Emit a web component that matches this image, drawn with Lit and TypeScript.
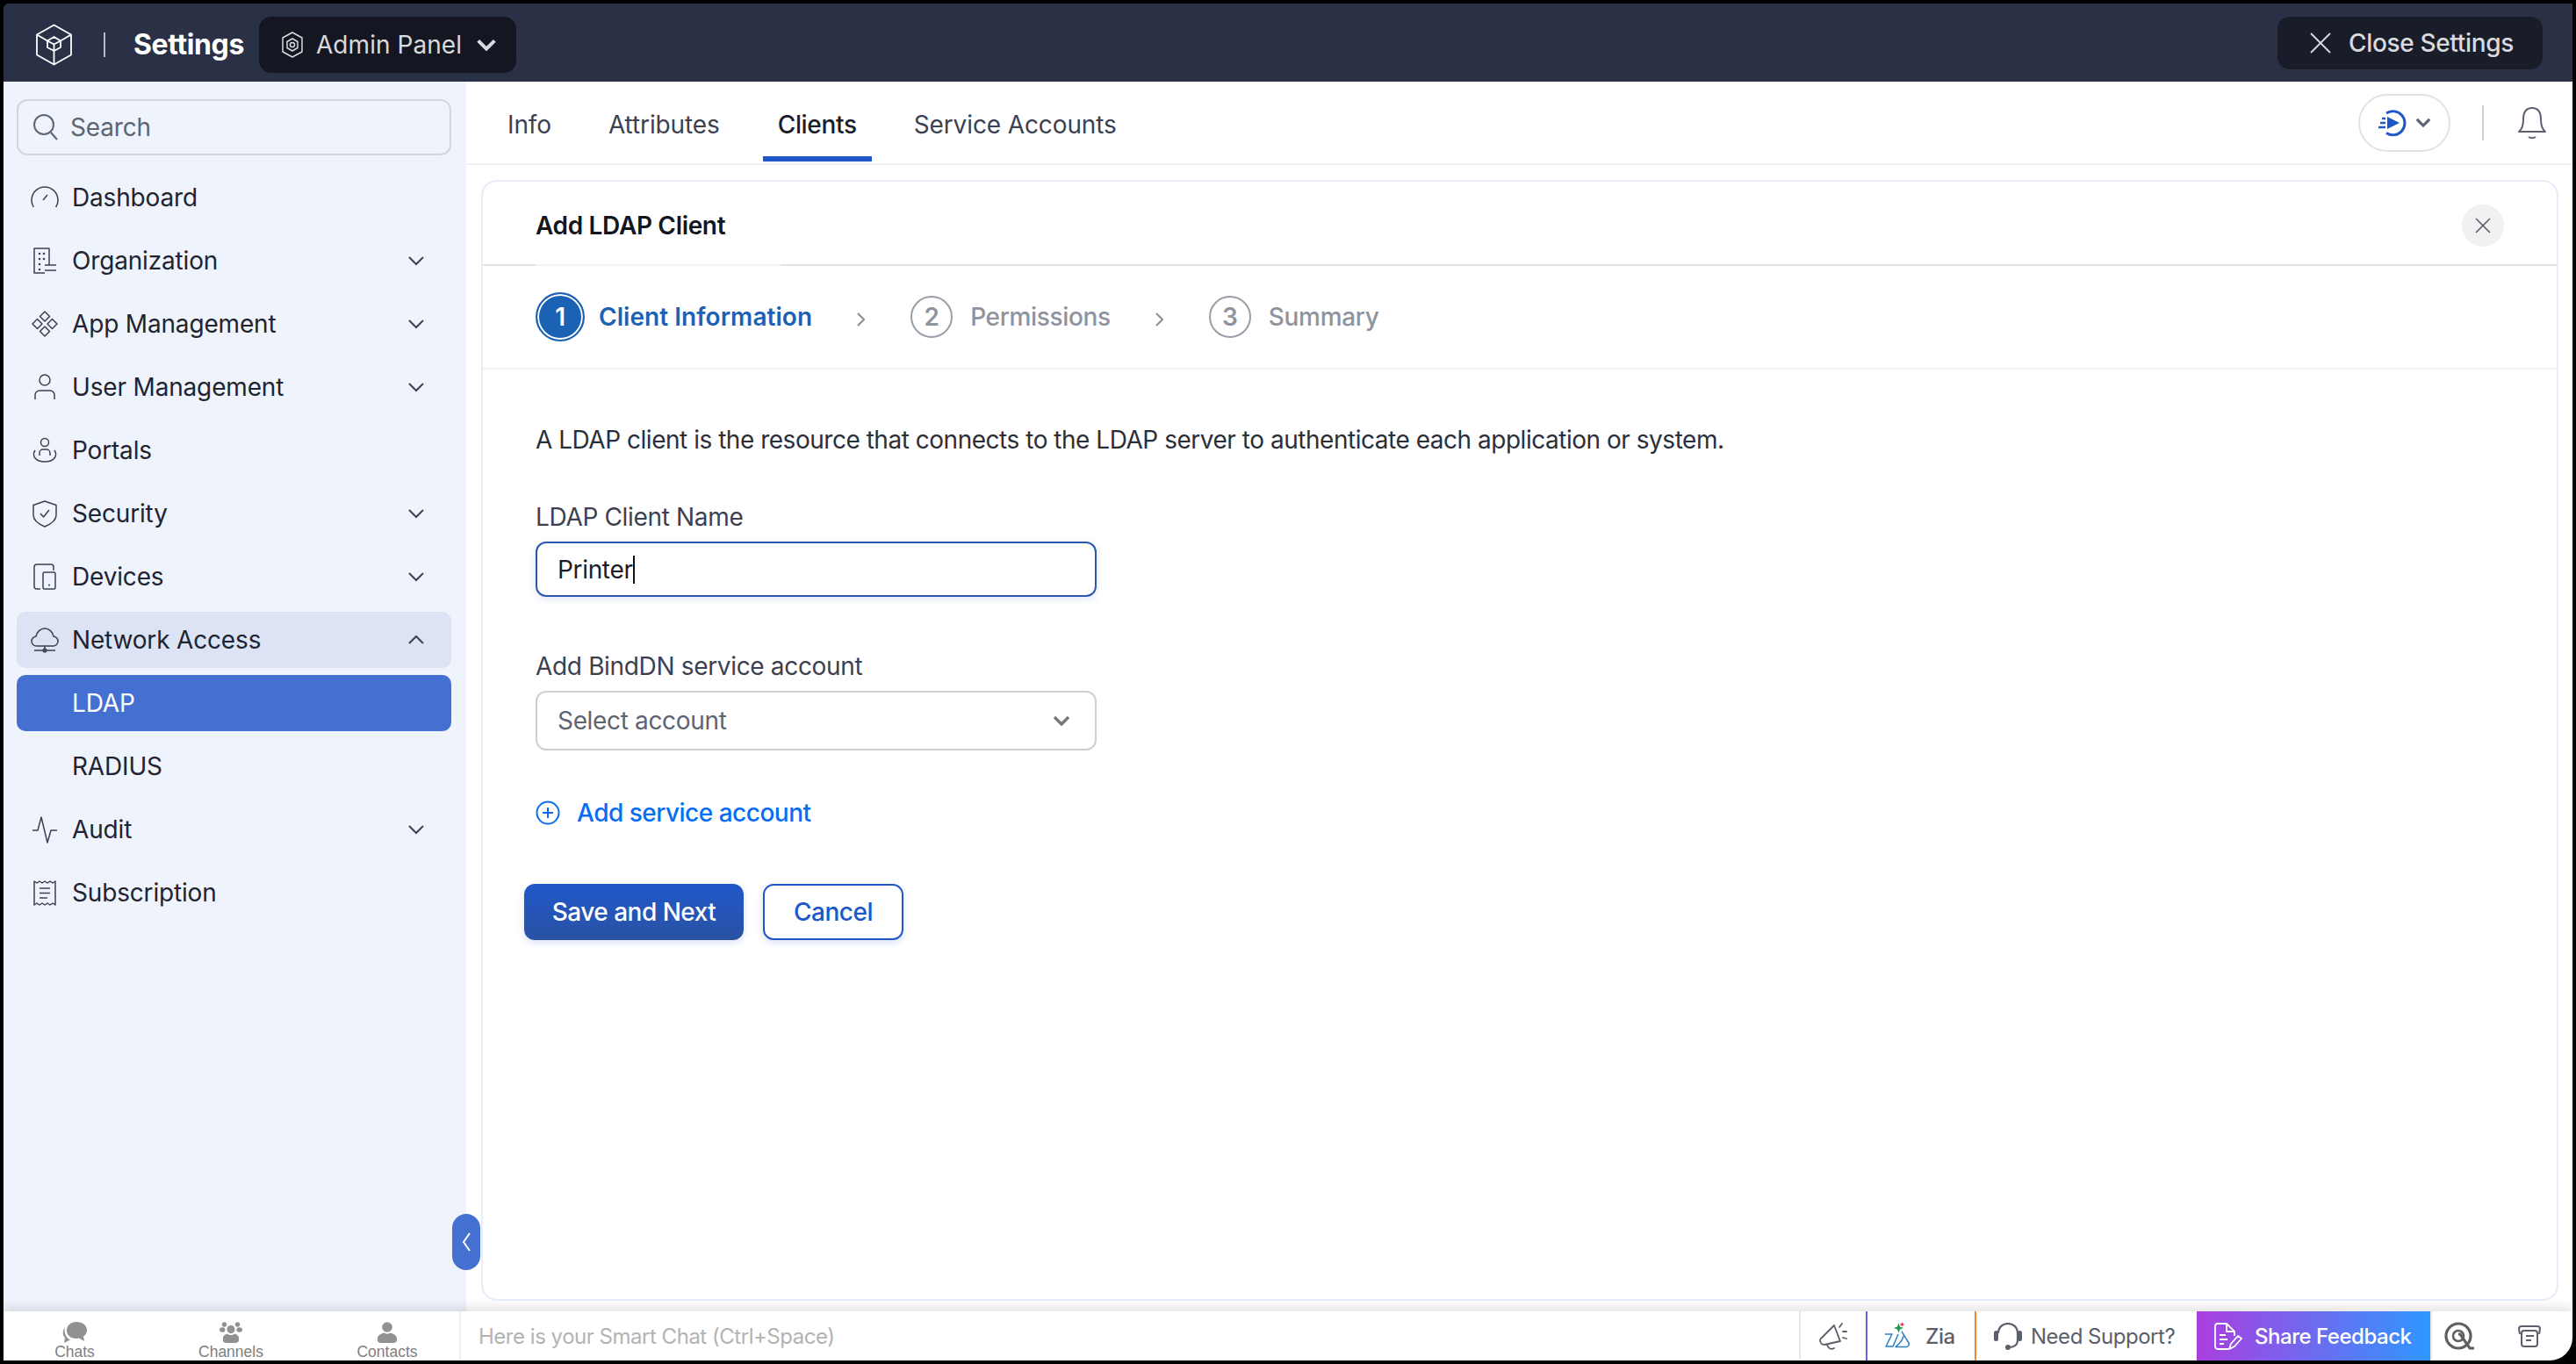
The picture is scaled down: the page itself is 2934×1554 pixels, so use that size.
import { LitElement, css, html, svg } from 'lit';
import { customElement } from 'lit/decorators.js';

const chevronDown = svg`<path d="M2 2 L10 10 L18 2" />`;

const navIcons: Record<string, unknown> = {
  dashboard: svg`<path d="M3.300 27 A15 15 0 1 1 28.700 27" /><path d="M14 19 L19 13" />`,
  org: svg`<path d="M16 30 H4 V2 H21 V21" /><path d="M10 8h.01M15 8h.01M10 14h.01M15 14h.01M10 20h.01M10 26h.01" stroke-width="2.600" stroke-linecap="round" /><path d="M16 21 H29 M16 27 H29" />`,
  apps: svg`<path d="M16 2 L21.500 7.500 L16 13 L10.500 7.500 Z" /><path d="M7.500 10.500 L13 16 L7.500 21.500 L2 16 Z" /><path d="M24.500 10.500 L30 16 L24.500 21.500 L19 16 Z" /><path d="M16 19 L21.500 24.500 L16 30 L10.500 24.500 Z" />`,
  user: svg`<circle cx="16" cy="8" r="6" /><path d="M5 30 V25 A5 5 0 0 1 10 20 H22 A5 5 0 0 1 27 25 V30" />`,
  portals: svg`<circle cx="16" cy="7" r="4.500" /><path d="M10 22 V19 A4 4 0 0 1 14 15 H18 A4 4 0 0 1 22 19 V22" /><path d="M5 16 C1 22 5 29 16 29 C27 29 31 22 27 16" />`,
  security: svg`<path d="M16 2 L29 6.500 V18 C29 24 23 28 16 31 C9 28 3 24 3 18 V6.500 Z" /><path d="M11 16 L14.500 20 L21 12" />`,
  devices: svg`<path d="M11 30 H7 A3 3 0 0 1 4 27 V5 A3 3 0 0 1 7 2 H23 A3 3 0 0 1 26 5 V9" /><rect x="14" y="11" width="14" height="19" rx="1.500" /><path d="M21 25.500h.01" stroke-width="2" stroke-linecap="round" />`,
  network: svg`<path d="M9 23 H7 A5.500 5.500 0 0 1 6 12 C7 7 11 3 16 3 C21 3 25 7 26 12 A5.500 5.500 0 0 1 25 23 H9 Z" /><path d="M16 23 V28 M4 28 H28" /><circle cx="16" cy="28" r="1.800" />`,
  audit: svg`<path d="M2 17 H8 L12 2 L19 31 L23 17 H30" />`,
  subscription: svg`<path d="M4 3 L7 5 L10 3 L13 5 L16 3 L19 5 L22 3 L25 5 L28 3 V30 L25 28 L22 30 L19 28 L16 30 L13 28 L10 30 L7 28 L4 30 Z" /><path d="M10 11 H22 M10 16.500 H22 M10 22 H19" />`,
};

const navItems = [
  { label: 'Dashboard', icon: 'dashboard' },
  { label: 'Organization', icon: 'org', arrow: 'down' },
  { label: 'App Management', icon: 'apps', arrow: 'down' },
  { label: 'User Management', icon: 'user', arrow: 'down' },
  { label: 'Portals', icon: 'portals' },
  { label: 'Security', icon: 'security', arrow: 'down' },
  { label: 'Devices', icon: 'devices', arrow: 'down' },
  { label: 'Network Access', icon: 'network', arrow: 'up', cls: 'open' },
  { label: 'LDAP', cls: 'active' },
  { label: 'RADIUS' },
  { label: 'Audit', icon: 'audit', arrow: 'down' },
  { label: 'Subscription', icon: 'subscription' },
];

@customElement('app-root')
export class AppRoot extends LitElement {
  static styles = css`
    :host {
      display: flex;
      flex-direction: column;
      box-sizing: border-box;
      height: 1554px;
      padding: 4px;
      background: #000;
      font-family: Inter, 'Noto Sans', sans-serif;
      font-size: 28px;
      letter-spacing: -0.012em;
      color: #1f2430;
      overflow: hidden;
    }

    svg {
      display: block;
      flex: none;
      fill: none;
      stroke: currentColor;
    }

    /* top bar */
    .topbar {
      display: flex;
      align-items: center;
      flex: none;
      box-sizing: border-box;
      height: 89px;
      padding-top: 4px;
      background: #2a3046;
      color: #fff;
      border-top-left-radius: 6px;
    }
    .logo { margin-left: 36px; width: 43px; height: 48px; stroke-width: 1.8; }
    .top-div { width: 2px; height: 28px; margin: 0 32px 0 35px; background: #b9bcc6; }
    .top-title { font-size: 32px; font-weight: 700; letter-spacing: -0.012em; }
    .panel-btn {
      display: flex;
      align-items: center;
      box-sizing: border-box;
      width: 293px;
      height: 64px;
      margin-left: 17px;
      padding-left: 25px;
      background: #141722;
      border-radius: 14px;
      color: #d9dade;
      letter-spacing: 0.002em;
    }
    .panel-btn .gear { width: 26px; height: 32px; margin-right: 14px; stroke-width: 1.5; }
    .panel-btn .chev { width: 24px; height: 14px; margin-left: 16px; stroke-width: 3.4; }
    .close-btn {
      display: flex;
      align-items: center;
      box-sizing: border-box;
      width: 302px;
      height: 60px;
      margin: -3px 34px 0 auto;
      padding-left: 36px;
      background: #191d2a;
      border-radius: 14px;
      color: #d9dade;
      font-weight: 500;
      letter-spacing: -0.012em;
    }
    .close-btn svg { width: 26px; height: 26px; margin-right: 19px; stroke-width: 1.8; }

    .body { display: flex; flex: 1; min-height: 0; position: relative; }

    /* sidebar */
    .side {
      flex: none;
      box-sizing: border-box;
      width: 527px;
      padding: 20px 17px 0 15px;
      background: #eff3fb;
      letter-spacing: -0.006em;
    }
    .search {
      display: flex;
      align-items: center;
      box-sizing: border-box;
      height: 64px;
      margin-bottom: 16px;
      padding-left: 16px;
      border: 2px solid #d3d5da;
      border-radius: 12px;
      color: #5d6472;
    }
    .search svg { width: 30px; height: 32px; margin-right: 13px; stroke-width: 2; }
    .item {
      display: flex;
      align-items: center;
      box-sizing: border-box;
      height: 64px;
      margin-bottom: 8px;
      padding-left: 16px;
      border-radius: 10px;
    }
    .item .ico { width: 32px; height: 32px; margin-right: 15px; stroke-width: 1.5; color: #3b4150; }
    .item .noico { width: 47px; flex: none; }
    .item .arrow { width: 20px; height: 12px; margin-left: auto; margin-right: 30px; stroke-width: 2; color: #3b4150; }
    .item.open { background: #dce3f4; }
    .item.open .arrow { transform: scaleY(-1); }
    .item.active { background: #4471d1; color: #fff; }

    .collapse {
      position: absolute;
      left: 511px;
      top: 1290px;
      display: flex;
      align-items: center;
      justify-content: center;
      width: 32px;
      height: 64px;
      background: #4471d1;
      border-radius: 16px;
      color: #fff;
    }
    .collapse svg { width: 10px; height: 22px; stroke-width: 2; }

    /* main */
    .main { display: flex; flex-direction: column; flex: 1; min-width: 0; background: #fff; }
    .tabs {
      display: flex;
      align-items: center;
      flex: none;
      box-sizing: border-box;
      height: 95px;
      padding-left: 30px;
      background: #fff;
      border-bottom: 2px solid #f1f1f2;
      color: #3b4150;
      letter-spacing: -0.004em;
    }
    .tab {
      display: flex;
      align-items: center;
      box-sizing: border-box;
      height: 93px;
      padding: 5px 17px 0;
      margin-right: 31px;
      position: relative;
    }
    .tab.on { color: #1a1d29; font-weight: 500; letter-spacing: -0.012em; margin-left: 1px; }
    .tab.on::after {
      content: '';
      position: absolute;
      left: 0;
      right: 0;
      bottom: 2px;
      height: 6px;
      background: #2156c9;
    }
    .tools { display: flex; align-items: center; margin-left: auto; }
    .chip {
      display: flex;
      align-items: center;
      justify-content: center;
      gap: 10px;
      box-sizing: border-box;
      width: 105px;
      height: 66px;
      border: 2px solid #e2e2e2;
      border-radius: 33px;
    }
    .chip .play { width: 32px; height: 32px; color: #2156c9; stroke-width: 3; }
    .chip .chev { width: 18px; height: 11px; color: #5a6070; stroke-width: 3.4; }
    .tool-div { width: 2px; height: 40px; margin: 0 38px 0 36px; background: #d2d2d2; }
    .bell { width: 34px; height: 38px; margin-right: 29px; color: #5a6070; stroke-width: 2; }

    .panel {
      display: flex;
      flex-direction: column;
      flex: 1;
      min-height: 0;
      margin: 17px 16px 12px 17px;
      background: #fff;
      border: 2px solid #e6ecf8;
      border-radius: 18px;
    }
    .panel-head {
      display: flex;
      align-items: center;
      flex: none;
      box-sizing: border-box;
      height: 96px;
      padding: 6px 60px 0 60px;
      border-bottom: 2px solid #e3e3e3;
      position: relative;
    }
    .panel-head::after {
      content: '';
      position: absolute;
      left: 60px;
      bottom: -2px;
      width: 279px;
      height: 2px;
      background: #f4f4f5;
    }
    .panel-title { font-weight: 600; color: #14161f; }
    .x-btn {
      display: flex;
      align-items: center;
      justify-content: center;
      width: 48px;
      height: 48px;
      margin-left: auto;
      border-radius: 50%;
      background: #f1f1f1;
      color: #5a5f6b;
    }
    .x-btn svg { width: 18px; height: 18px; stroke-width: 1.6; }

    .steps {
      display: flex;
      align-items: center;
      flex: none;
      box-sizing: border-box;
      height: 118px;
      padding-left: 60px;
      border-bottom: 2px solid #f1f1f2;
      color: #8e939e;
      font-weight: 500;
    }
    .num {
      display: flex;
      align-items: center;
      justify-content: center;
      box-sizing: border-box;
      width: 48px;
      height: 48px;
      margin-right: 20px;
      border: 2px solid #9a9ea8;
      border-radius: 50%;
      font-weight: 600;
    }
    .num.cur {
      width: 56px;
      height: 56px;
      margin-right: 16px;
      background: #1b62b4;
      color: #fff;
      border: 2px solid #1b62b4;
      box-shadow: inset 0 0 0 2px #fff;
    }
    .step-cur { color: #1b62b4; font-weight: 600; letter-spacing: 0.002em; }
    .step-sep { width: 9px; height: 16px; margin: 6px 52px 0 51px; stroke-width: 2; color: #8a8e98; }

    .form { padding: 60px 60px 0; }
    .desc { line-height: 40px; color: #2b2f3a; margin-bottom: 50px; letter-spacing: -0.017em; }
    .label { line-height: 36px; color: #3b4150; margin-bottom: 10px; }
    .input {
      display: flex;
      align-items: center;
      box-sizing: border-box;
      width: 639px;
      height: 63px;
      padding-left: 23px;
      border: 2px solid #2a57ac;
      border-radius: 12px;
      box-shadow: 0 2px 8px rgba(42, 87, 172, 0.16);
      color: #1a1d29;
      margin-bottom: 61px;
    }
    .caret { width: 2px; height: 32px; background: #111; }
    .select {
      display: flex;
      align-items: center;
      box-sizing: border-box;
      width: 639px;
      height: 68px;
      padding: 0 28px 0 23px;
      border: 2px solid #cfcfcf;
      border-radius: 12px;
      color: #5d6472;
      margin-bottom: 53px;
    }
    .select svg { width: 20px; height: 12px; margin-left: auto; stroke-width: 3.4; color: #777; }
    .add { display: flex; align-items: center; height: 36px; color: #0a6cf0; font-weight: 500; letter-spacing: -0.018em; }
    .add svg { width: 28px; height: 28px; margin-right: 19px; stroke-width: 2; }
    .actions { display: flex; gap: 22px; margin: 63px 0 0 -13px; }
    .btn {
      display: flex;
      align-items: center;
      justify-content: center;
      box-sizing: border-box;
      height: 64px;
      border-radius: 12px;
      font-weight: 500;
      letter-spacing: -0.018em;
      box-shadow: 0 3px 8px rgba(33, 86, 201, 0.18);
    }
    .btn.save { width: 250px; background: linear-gradient(#2058c9, #2a52a3); color: #fff; }
    .btn.cancel { width: 160px; background: #fff; border: 2px solid #2156c9; color: #2156c9; }

    /* bottom bar */
    .bottom {
      display: flex;
      align-items: stretch;
      flex: none;
      height: 56px;
      background: #fff;
      border-bottom-right-radius: 26px;
      box-shadow: 0 -5px 12px rgba(0, 0, 0, 0.11);
      position: relative;
      font-size: 24px;
      color: #5a5f6b;
      letter-spacing: -0.02em;
    }
    .modes { display: flex; flex: none; width: 521px; border-right: 2px solid #eee; box-sizing: border-box; }
    .mode {
      display: flex;
      flex-direction: column;
      align-items: center;
      justify-content: flex-end;
      flex: none;
      width: 178px;
      font-family: 'Liberation Sans', Arial, sans-serif;
      font-size: 17.500px;
      line-height: 20px;
      color: #808080;
      letter-spacing: 0;
    }
    .mode:first-child { margin-left: -8px; }
    .mode svg { height: 24px; fill: #919191; stroke: none; }
    .smart { display: flex; align-items: center; flex: 1; padding-left: 20px; color: #b3b3b3; }
    .cell { display: flex; align-items: center; flex: none; box-sizing: border-box; }
    .cell svg { color: #5a5f6b; }
    .megaphone { width: 76px; justify-content: center; border-left: 2px solid #e8e8e8; }
    .megaphone svg { width: 32px; height: 31px; stroke-width: 1.8; }
    .zia { width: 124px; padding-left: 19px; border-left: 2px solid #6a63e8; font-weight: 500; }
    .zia svg { width: 30px; height: 30px; margin-right: 17px; }
    .support { width: 253px; padding-left: 20px; border-left: 2px solid #f08a34; }
    .support svg { width: 32px; height: 31px; margin-right: 10px; stroke-width: 2.2; }
    .feedback {
      width: 266px;
      padding-left: 20px;
      background: linear-gradient(90deg, #ab3fe0, #2f97ff);
      color: #fff;
      font-weight: 500;
    }
    .feedback svg { width: 32px; height: 31px; margin-right: 14px; color: #fff; stroke-width: 1.8; }
    .mini { justify-content: center; border-left: 2px solid #e8e8e8; width: 64px; }
    .mini.q svg { width: 34px; height: 32px; color: #5f5f5f; stroke-width: 3.2; }
    .mini.doc { width: 98px; border: 0; }
    .mini.doc svg { width: 28px; height: 26px; stroke-width: 2; }
  `;

  render() {
    return html`
      <div class="topbar">
        <svg class="logo" viewBox="0 0 43 48" stroke-linejoin="round">
          <path d="M21.500 1.500 L41 12.500 V35.500 L21.500 46.500 L2 35.500 V12.500 Z" />
          <path d="M2 12.500 L14 19.500 M41 12.500 L29 19.500 M21.500 46.500 V31" />
          <path d="M21.500 15 L29 19.500 V27 L21.500 31 L14 27 V19.500 Z M14 19.500 L21.500 23.500 L29 19.500 M21.500 23.500 V31" />
        </svg>
        <div class="top-div"></div>
        <div class="top-title">Settings</div>
        <div class="panel-btn">
          <svg class="gear" viewBox="0 0 26 32" stroke-linejoin="round">
            <path d="M13 2 L24 8 V24 L13 30 L2 24 V8 Z" />
            <path d="M13 9 L19 12.500 V19.500 L13 23 L7 19.500 V12.500 Z" />
            <circle cx="13" cy="16" r="2.600" />
          </svg>
          <span>Admin Panel</span>
          <svg class="chev" viewBox="0 0 20 12">${chevronDown}</svg>
        </div>
        <div class="close-btn">
          <svg viewBox="0 0 26 26"><path d="M2 2 L24 24 M24 2 L2 24" /></svg>
          <span>Close Settings</span>
        </div>
      </div>

      <div class="body">
        <div class="side">
          <div class="search">
            <svg viewBox="0 0 30 32"><circle cx="13" cy="13" r="11" /><path d="M21 22 L28 30" /></svg>
            <span>Search</span>
          </div>
          ${navItems.map(
            (it) => html`
              <div class="item ${it.cls ?? ''}">
                ${it.icon
                  ? html`<svg class="ico" viewBox="0 0 32 32" stroke-linejoin="round">${navIcons[it.icon]}</svg>`
                  : html`<span class="noico"></span>`}
                <span>${it.label}</span>
                ${it.arrow ? html`<svg class="arrow" viewBox="0 0 20 12">${chevronDown}</svg>` : ''}
              </div>
            `,
          )}
        </div>
        <div class="collapse">
          <svg viewBox="0 0 10 22"><path d="M9 1 L2 11 L9 21" /></svg>
        </div>

        <div class="main">
          <div class="tabs">
            <div class="tab">Info</div>
            <div class="tab">Attributes</div>
            <div class="tab on">Clients</div>
            <div class="tab">Service Accounts</div>
            <div class="tools">
              <div class="chip">
                <svg class="play" viewBox="0 0 32 32">
                  <path d="M9 5 A13.500 13.500 0 1 1 9 27.500" />
                  <path d="M10 9 L24 16 L10 23 Z" fill="currentColor" stroke="none" />
                  <path d="M4 11 H8 M2 16 H8 M0 21 H8" stroke-width="2.400" />
                </svg>
                <svg class="chev" viewBox="0 0 20 12">${chevronDown}</svg>
              </div>
              <div class="tool-div"></div>
              <svg class="bell" viewBox="0 0 34 38" stroke-linejoin="round">
                <path d="M2 29 C6 26 7 22 7 15 C7 6 11 2 17 2 C23 2 27 6 27 15 C27 22 28 26 32 29 Z" />
                <path d="M13 35 C15 36.500 19 36.500 21 35" />
              </svg>
            </div>
          </div>

          <div class="panel">
            <div class="panel-head">
              <div class="panel-title">Add LDAP Client</div>
              <div class="x-btn">
                <svg viewBox="0 0 18 18"><path d="M1 1 L17 17 M17 1 L1 17" /></svg>
              </div>
            </div>
            <div class="steps">
              <div class="num cur">1</div>
              <span class="step-cur">Client Information</span>
              <svg class="step-sep" viewBox="0 0 9 16"><path d="M1 1 L8 8 L1 15" /></svg>
              <div class="num">2</div>
              <span>Permissions</span>
              <svg class="step-sep" viewBox="0 0 9 16"><path d="M1 1 L8 8 L1 15" /></svg>
              <div class="num">3</div>
              <span>Summary</span>
            </div>
            <div class="form">
              <div class="desc">A LDAP client is the resource that connects to the LDAP server to authenticate each application or system.</div>
              <div class="label">LDAP Client Name</div>
              <div class="input"><span>Printer</span><span class="caret"></span></div>
              <div class="label">Add BindDN service account</div>
              <div class="select">
                <span>Select account</span>
                <svg viewBox="0 0 20 12">${chevronDown}</svg>
              </div>
              <div class="add">
                <svg viewBox="0 0 28 28"><circle cx="14" cy="14" r="12.500" /><path d="M14 8 V20 M8 14 H20" /></svg>
                <span>Add service account</span>
              </div>
              <div class="actions">
                <div class="btn save">Save and Next</div>
                <div class="btn cancel">Cancel</div>
              </div>
            </div>
          </div>
        </div>
      </div>

      <div class="bottom">
        <div class="modes">
          <div class="mode">
            <svg viewBox="0 0 28 24" width="28">
              <path d="M16 0 C23 0 28 4 28 9.500 C28 12.500 26.500 15 24 16.500 L25 22 L19 18.500 L16 19 C9 19 5 15 5 9.500 C5 4 10 0 16 0 Z" />
              <path d="M3 6 C-0.500 11 0.500 16 3 18 L2 24 L9 20.500 C4 18 1.500 12 3 6 Z" />
            </svg>
            <span>Chats</span>
          </div>
          <div class="mode">
            <svg viewBox="0 0 26 24" width="26">
              <circle cx="5.500" cy="3" r="2.700" /><circle cx="20.500" cy="3" r="2.700" />
              <ellipse cx="3.300" cy="9" rx="3.300" ry="2.800" /><ellipse cx="22.700" cy="9" rx="3.300" ry="2.800" />
              <circle cx="13" cy="8.500" r="4.500" />
              <path d="M4 21 V18 C4 15 8 14 9 13.500 C11 15.500 15 15.500 17 13.500 C18 14 22 15 22 18 V21 C22 23 20 24 18 24 H8 C6 24 4 23 4 21 Z" />
            </svg>
            <span>Channels</span>
          </div>
          <div class="mode">
            <svg viewBox="0 0 22 24" width="22">
              <circle cx="11" cy="6" r="5.800" />
              <path d="M0 21 V19 C0 15 5 13 7.500 12.500 C9.500 14 12.500 14 14.500 12.500 C17 13 22 15 22 19 V21 C22 23 20 24 18 24 H4 C2 24 0 23 0 21 Z" />
            </svg>
            <span>Contacts</span>
          </div>
        </div>
        <div class="smart">Here is your Smart Chat (Ctrl+Space)</div>
        <div class="cell megaphone">
          <svg viewBox="0 0 32 31" stroke-linejoin="round" stroke-linecap="round">
            <path d="M17 3 L24 21 L6 25 C3 25 1 23 1 20 C1 18.500 2 18 3 17 Z" />
            <path d="M9 25 C10 29 13 31 17 29" />
            <path d="M23 5 L26 1 M27 10 H31 M27 17 L31 18" />
          </svg>
        </div>
        <div class="cell zia">
          <svg viewBox="0 0 30 30" stroke-width="1.500" stroke-linejoin="round">
            <path d="M16.500 0.500 L18 4.500 L22 6 L18 7.500 L16.500 11.500 L15 7.500 L11 6 L15 4.500 Z" fill="#1f9a4d" stroke="none" />
            <path d="M20.500 0 V4 M18.500 2 H22.500" stroke="#e0344a" />
            <path d="M1 13 H9 L2 27 H10 L16 13" stroke="#2a7fc4" />
            <path d="M20 10 L28 23 C29 26 27 27.500 25 27.500 H13 C16 25 21 21 22 15" stroke="#2a7fc4" />
          </svg>
          <span>Zia</span>
        </div>
        <div class="cell support">
          <svg viewBox="0 0 32 31">
            <path d="M5 12 C5 5 10 1 16 1 C22 1 27 5 27 12 V20 C27 25 23 28 17 28" />
            <rect x="0" y="9" width="5" height="12" rx="2.500" fill="currentColor" stroke="none" />
            <rect x="27" y="9" width="5" height="12" rx="2.500" fill="currentColor" stroke="none" />
            <circle cx="16" cy="28" r="3" fill="currentColor" stroke="none" />
          </svg>
          <span>Need Support?</span>
        </div>
        <div class="cell feedback">
          <svg viewBox="0 0 32 31" stroke-linejoin="round">
            <path d="M16 30 H4 A3 3 0 0 1 1 27 V4 A3 3 0 0 1 4 1 H14 L23 10 V15 M14 1 V10 H23" />
            <path d="M6 14 H13 M6 19 H15 M6 24 H11" />
            <path d="M17 30 L19 24 L27 15 L31 18 L23 27 Z" />
          </svg>
          <span>Share Feedback</span>
        </div>
        <div class="cell mini q">
          <svg viewBox="0 0 34 32">
            <circle cx="16" cy="16" r="14" />
            <circle cx="16" cy="16" r="6" stroke-width="2.600" />
            <path d="M16 14 L18 14 L29 30 H34" />
          </svg>
        </div>
        <div class="cell mini doc">
          <svg viewBox="0 0 28 26" stroke-linejoin="round">
            <path d="M3 11 L2 5 C2 3 3 2 5 2 H23 C25 2 26 3 26 5 L25 11" />
            <rect x="5" y="7" width="18" height="18" rx="3" />
            <path d="M10 13 H19 M10 18 H16" />
          </svg>
        </div>
      </div>
    `;
  }
}
